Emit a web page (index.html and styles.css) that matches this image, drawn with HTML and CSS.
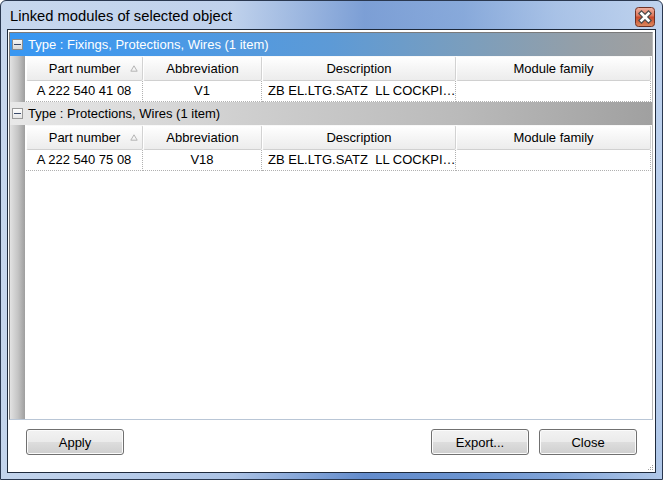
FILE: index.html
```html
<!DOCTYPE html>
<html>
<head>
<meta charset="utf-8">
<link rel="stylesheet" href="styles.css">
</head>
<body>
<div class="window">
  <div class="titlebar">
    <span class="title">Linked modules of selected object</span>
    <span class="close-btn">
      <svg width="20" height="20" viewBox="0 0 20 20">
        <defs>
          <linearGradient id="cg" x1="0" y1="0" x2="0" y2="1">
            <stop offset="0" stop-color="#efb2a2"/>
            <stop offset="0.45" stop-color="#dc7459"/>
            <stop offset="0.5" stop-color="#c9482b"/>
            <stop offset="1" stop-color="#dd8a5e"/>
          </linearGradient>
        </defs>
        <rect x="0.5" y="0.5" width="19" height="19" rx="3" fill="url(#cg)" stroke="#6e3226"/>
        <path d="M6.5 6.5 L13.5 13.5 M13.5 6.5 L6.5 13.5" stroke="#4b4b4b" stroke-width="5" stroke-linecap="square" fill="none"/>
        <path d="M6.5 6.5 L13.5 13.5 M13.5 6.5 L6.5 13.5" stroke="#ffffff" stroke-width="2.6" stroke-linecap="square" fill="none"/>
      </svg>
    </span>
  </div>
  <div class="client">
    <div class="grid">
      <div class="group group-active">
        <span class="toggle"><span class="minus"></span></span>
        <span class="group-label">Type : Fixings, Protections, Wires (1 item)</span>
      </div>
      <div class="group-body">
        <div class="gutter"></div>
        <div class="table">
          <div class="hrow">
            <div class="hcell c1">Part number
              <svg class="sort" width="8" height="7" viewBox="0 0 8 7"><path d="M4 0.8 L0.8 6.2 L7.2 6.2 Z" fill="none" stroke="#b4b4b4" stroke-width="1"/></svg>
            </div>
            <div class="hcell c2">Abbreviation</div>
            <div class="hcell c3">Description</div>
            <div class="hcell c4">Module family</div>
          </div>
          <div class="drow">
            <div class="dcell c1 center">A 222 540 41 08</div>
            <div class="dcell c2 center">V1</div>
            <div class="dcell c3 left">ZB EL.LTG.SATZ&nbsp; LL COCKPI…</div>
            <div class="dcell c4"></div>
          </div>
        </div>
      </div>
      <div class="group group-plain">
        <span class="toggle"><span class="minus"></span></span>
        <span class="group-label">Type : Protections, Wires (1 item)</span>
      </div>
      <div class="group-body">
        <div class="gutter"></div>
        <div class="table">
          <div class="hrow">
            <div class="hcell c1">Part number
              <svg class="sort" width="8" height="7" viewBox="0 0 8 7"><path d="M4 0.8 L0.8 6.2 L7.2 6.2 Z" fill="none" stroke="#b4b4b4" stroke-width="1"/></svg>
            </div>
            <div class="hcell c2">Abbreviation</div>
            <div class="hcell c3">Description</div>
            <div class="hcell c4">Module family</div>
          </div>
          <div class="drow">
            <div class="dcell c1 center">A 222 540 75 08</div>
            <div class="dcell c2 center">V18</div>
            <div class="dcell c3 left">ZB EL.LTG.SATZ&nbsp; LL COCKPI…</div>
            <div class="dcell c4"></div>
          </div>
        </div>
      </div>
      <div class="group-body filler">
        <div class="gutter"></div>
        <div class="table"></div>
      </div>
    </div>
    <div class="buttons">
      <button class="btn">Apply</button>
      <div class="spacer"></div>
      <button class="btn">Export...</button>
      <button class="btn">Close</button>
      <svg class="grip" width="6" height="6" viewBox="0 0 6 6">
        <rect x="4" y="0" width="1" height="1" fill="#a0a0a0"/>
        <rect x="2" y="2" width="1" height="1" fill="#a0a0a0"/>
        <rect x="4" y="2" width="1" height="1" fill="#a0a0a0"/>
        <rect x="0" y="4" width="1" height="1" fill="#a0a0a0"/>
        <rect x="2" y="4" width="1" height="1" fill="#a0a0a0"/>
        <rect x="4" y="4" width="1" height="1" fill="#a0a0a0"/>
      </svg>
    </div>
  </div>
</div>
</body>
</html>
```
FILE: styles.css
```css
* { box-sizing: border-box; }
html, body { margin: 0; padding: 0; }
body {
  width: 663px;
  height: 480px;
  overflow: hidden;
  font-family: "Liberation Sans", Arial, sans-serif;
  font-size: 13px;
  color: #000;
  background: #fff;
}
.window {
  width: 663px;
  height: 480px;
  border: 1px solid #2a3850;
  border-radius: 6px 6px 0 0;
  background:
    linear-gradient(to right, rgba(200,216,238,0.95) 0%, rgba(190,208,235,0.8) 35%, rgba(100,140,205,0.75) 55%, rgba(110,150,210,0.7) 70%, rgba(150,180,225,0.6) 84%, rgba(190,210,238,0.85) 100%),
    linear-gradient(to bottom, #c6d8ef 0%, #a8c2e6 40%, #7fa3d6 85%, #5f8ccc 100%);
  display: flex;
  flex-direction: column;
}
.titlebar {
  height: 28px;
  display: flex;
  justify-content: space-between;
  align-items: flex-start;
  padding: 0 7px 0 9px;
}
.title {
  font-size: 14.75px;
  line-height: 28px;
  padding-top: 1px;
  color: #000;
  white-space: nowrap;
}
.close-btn {
  display: block;
  width: 20px;
  height: 20px;
  margin-top: 6px;
}
.close-btn svg { display: block; }
.client {
  flex: 1;
  margin: 0 6px 6px 6px;
  border: 1px solid #1e2a3c;
  background: #fff;
  display: flex;
  flex-direction: column;
  position: relative;
}
.grid {
  margin: 2px 2px 0 1px;
  height: 388px;
  border: 1px solid #7a7a7a;
  border-right-color: #b8b8b8;
  border-bottom-color: #b9c6d6;
  display: flex;
  flex-direction: column;
  background: #fff;
}
.group {
  height: 23px;
  display: flex;
  align-items: center;
  flex-shrink: 0;
}
.group-active {
  background: linear-gradient(to right, #3897f2 0%, #4a99e6 25%, #5d9ad6 50%, #7c9ebc 72%, #939fa9 88%, #a0a0a0 100%);
  color: #fff;
}
.group-plain {
  background: linear-gradient(to right, #e8e8e8 0%, #d0d0d0 35%, #bababa 70%, #a0a0a0 100%);
  color: #000;
}
.toggle {
  width: 11px;
  height: 11px;
  margin-left: 2px;
  border: 1px solid #8c8c8c;
  background: linear-gradient(to bottom, #f6f6f6, #d8d8d8);
  display: flex;
  align-items: center;
  justify-content: center;
}
.group-plain .toggle {
  border-color: #9a9a9a;
  background: linear-gradient(to bottom, #ffffff, #e6e6e6);
}
.minus {
  width: 7px;
  height: 1px;
  background: #3a4a6a;
}
.group-label {
  margin-left: 5px;
  line-height: 23px;
  white-space: nowrap;
}
.group-body {
  display: flex;
  flex-shrink: 0;
}
.filler { flex: 1; }
.gutter {
  width: 16px;
  flex-shrink: 0;
  background: linear-gradient(to right, #e2e2e2 0%, #c4c4c4 50%, #9e9e9e 94%, #ffffff 94%);
}
.table {
  flex: 1;
  display: flex;
  flex-direction: column;
  background: #fff;
}
.hrow, .drow { display: flex; }
.c1 { width: 117px; }
.c2 { width: 119px; }
.c3 { width: 194px; }
.c4 { width: 195px; }
.hcell {
  position: relative;
  height: 25px;
  line-height: 23px;
  text-align: center;
  border-left: 1px solid #ffffff;
  border-right: 1px solid #d2d2d2;
  border-bottom: 1px solid #d0d0d0;
  border-top: 1px solid #f8f8f8;
  border-radius: 2px;
  background: linear-gradient(to bottom, #ffffff 0%, #f6f6f6 45%, #ececec 100%);
  white-space: nowrap;
}
.sort {
  position: absolute;
  right: 4px;
  top: 8px;
}
.drow { height: 21px; }
.dcell {
  height: 21px;
  line-height: 20px;
  border-right: 1px dotted #b0b0b0;
  border-bottom: 1px dotted #b0b0b0;
  white-space: pre;
  overflow: hidden;
}
.center { text-align: center; }
.left { text-align: left; padding-left: 6px; }
.buttons {
  flex: 1;
  display: flex;
  align-items: flex-start;
  padding: 9px 18px 0 18px;
  gap: 10px;
  position: relative;
}
.spacer { flex: 1; }
.btn {
  width: 98px;
  height: 26px;
  padding: 0;
  font-family: "Liberation Sans", Arial, sans-serif;
  font-size: 13px;
  color: #000;
  border: 1px solid #707070;
  border-radius: 3px;
  background: linear-gradient(to bottom, #f2f2f2 0%, #ebebeb 48%, #dddddd 52%, #cfcfcf 100%);
  box-shadow: inset 0 0 0 1px #fbfbfb;
}
.grip {
  position: absolute;
  right: 1px;
  bottom: 1px;
}
```
